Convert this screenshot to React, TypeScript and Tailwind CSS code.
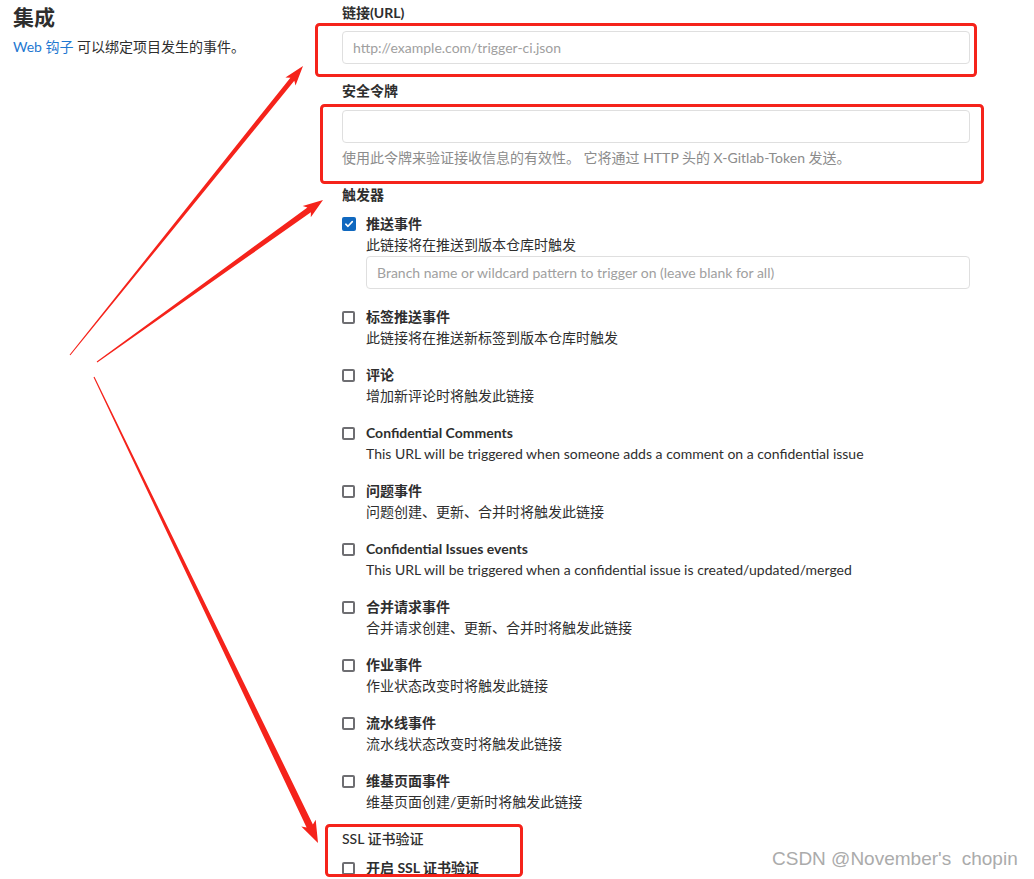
import React from "react";

const FONT = { fontFamily: 'Lato, "Noto Sans CJK SC", sans-serif' } as React.CSSProperties;

type Ev = { title: string; desc: string; checked?: boolean; branch?: boolean };

const events: Ev[] = [
  { title: "推送事件", desc: "此链接将在推送到版本仓库时触发", checked: true, branch: true },
  { title: "标签推送事件", desc: "此链接将在推送新标签到版本仓库时触发" },
  { title: "评论", desc: "增加新评论时将触发此链接" },
  { title: "Confidential Comments", desc: "This URL will be triggered when someone adds a comment on a confidential issue" },
  { title: "问题事件", desc: "问题创建、更新、合并时将触发此链接" },
  { title: "Confidential Issues events", desc: "This URL will be triggered when a confidential issue is created/updated/merged" },
  { title: "合并请求事件", desc: "合并请求创建、更新、合并时将触发此链接" },
  { title: "作业事件", desc: "作业状态改变时将触发此链接" },
  { title: "流水线事件", desc: "流水线状态改变时将触发此链接" },
  { title: "维基页面事件", desc: "维基页面创建/更新时将触发此链接" },
];

function Checkbox({ checked }: { checked?: boolean }) {
  if (checked) {
    return (
      <span className="flex h-[14px] w-[14px] items-center justify-center rounded-[2px] bg-[#1068bf]">
        <svg width="10" height="10" viewBox="0 0 10 10">
          <path d="M1.8 5.2 L4 7.3 L8.3 2.6" fill="none" stroke="#fff" strokeWidth="1.6" strokeLinecap="round" strokeLinejoin="round" />
        </svg>
      </span>
    );
  }
  return <span className="block h-[13px] w-[13px] rounded-[2px] border-2 border-[#6e6e72] bg-white" />;
}

function arrowPoly(x1: number, y1: number, x2: number, y2: number, w0: number, w1: number, hw: number, hl: number) {
  const dx = x2 - x1;
  const dy = y2 - y1;
  const len = Math.hypot(dx, dy);
  const ux = dx / len;
  const uy = dy / len;
  const nx = -uy;
  const ny = ux;
  const bx = x2 - ux * hl;
  const by = y2 - uy * hl;
  const pts: [number, number][] = [
    [x1 + nx * w0 / 2, y1 + ny * w0 / 2],
    [bx + nx * w1 / 2, by + ny * w1 / 2],
    [bx - ux * 3 + nx * hw / 2, by - uy * 3 + ny * hw / 2],
    [x2, y2],
    [bx - ux * 3 - nx * hw / 2, by - uy * 3 - ny * hw / 2],
    [bx - nx * w1 / 2, by - ny * w1 / 2],
    [x1 - nx * w0 / 2, y1 - ny * w0 / 2],
  ];
  return pts.map((p) => `${p[0].toFixed(1)},${p[1].toFixed(1)}`).join(" ");
}

function Overlay() {
  const red = "#f5231b";
  return (
    <svg className="pointer-events-none absolute left-0 top-0" width="1034" height="879" viewBox="0 0 1034 879">
      <rect x="316.5" y="24.5" width="659" height="51" rx="3" fill="none" stroke={red} strokeWidth="3" />
      <rect x="321.5" y="105.5" width="661" height="77" rx="3" fill="none" stroke={red} strokeWidth="3" />
      <rect x="326.5" y="825.5" width="195" height="50" rx="3" fill="none" stroke={red} strokeWidth="3" />
      <polygon points={arrowPoly(70, 355, 303, 66, 1, 5, 13, 17)} fill={red} />
      <polygon points={arrowPoly(97, 362, 323, 200, 1, 6, 14, 17)} fill={red} />
      <polygon points={arrowPoly(94, 377, 318, 843, 1, 7, 16, 19)} fill={red} />
    </svg>
  );
}

export default function App() {
  return (
    <div className="relative h-[879px] w-[1034px] overflow-hidden bg-white text-[14px] text-[#2e2e2e]" style={FONT}>
      <div className="flex">
        <div className="w-[342px] shrink-0 pl-[13px]">
          <h2 className="mt-[4px] text-[21px] font-bold leading-[26px] text-[#2e2e2e]">集成</h2>
          <p className="mt-[7px] leading-[20px]">
            <span className="text-[#1f78d1]">Web 钩子</span> 可以绑定项目发生的事件。
          </p>
        </div>
        <div className="w-[628px] shrink-0 pt-[3px]">
          <div className="h-[20px] font-bold leading-[20px]">链接(URL)</div>
          <div className="mt-[8px] flex h-[33px] items-center rounded-[4px] border border-[#dfdfdf] px-[10px] text-[#a0a0a0]">
            http://example.com/trigger-ci.json
          </div>
          <div className="mt-[17px] h-[20px] font-bold leading-[20px]">安全令牌</div>
          <div className="mt-[9px] h-[33px] rounded-[4px] border border-[#dfdfdf]" />
          <div className="mt-[5px] h-[20px] leading-[20px] text-[#8c8c8c]">
            使用此令牌来验证接收信息的有效性。 它将通过 HTTP 头的 X-Gitlab-Token 发送。
          </div>
          <div className="mt-[17px] h-[20px] font-bold leading-[20px]">触发器</div>
          <div className="mt-[9px] flex flex-col gap-[17px]">
            {events.map((e) => (
              <div key={e.title} className="flex">
                <div className="flex h-[20px] w-[24px] shrink-0 items-center">
                  <Checkbox checked={e.checked} />
                </div>
                <div className="flex-1">
                  <div className="h-[20px] font-bold leading-[20px]">{e.title}</div>
                  <div className="mt-[1px] h-[20px] leading-[20px]">{e.desc}</div>
                  {e.branch && (
                    <div className="mb-[1px] mt-[1px] flex h-[33px] items-center rounded-[4px] border border-[#dfdfdf] px-[10px] text-[#a0a0a0]">
                      Branch name or wildcard pattern to trigger on (leave blank for all)
                    </div>
                  )}
                </div>
              </div>
            ))}
          </div>
          <div className="mt-[17px] h-[20px] leading-[20px] font-medium">SSL 证书验证</div>
          <div className="mt-[9px] flex">
            <div className="flex h-[20px] w-[24px] shrink-0 items-center">
              <Checkbox />
            </div>
            <div className="h-[20px] font-bold leading-[20px]">开启 SSL 证书验证</div>
          </div>
        </div>
      </div>
      <Overlay />
      <div
        className="absolute left-[772px] top-[847px] text-[19px] leading-[24px] text-[#ababab]"
        style={{ fontFamily: '"Liberation Sans", Arial, sans-serif' }}
      >
        CSDN @November's&nbsp; chopin
      </div>
    </div>
  );
}
